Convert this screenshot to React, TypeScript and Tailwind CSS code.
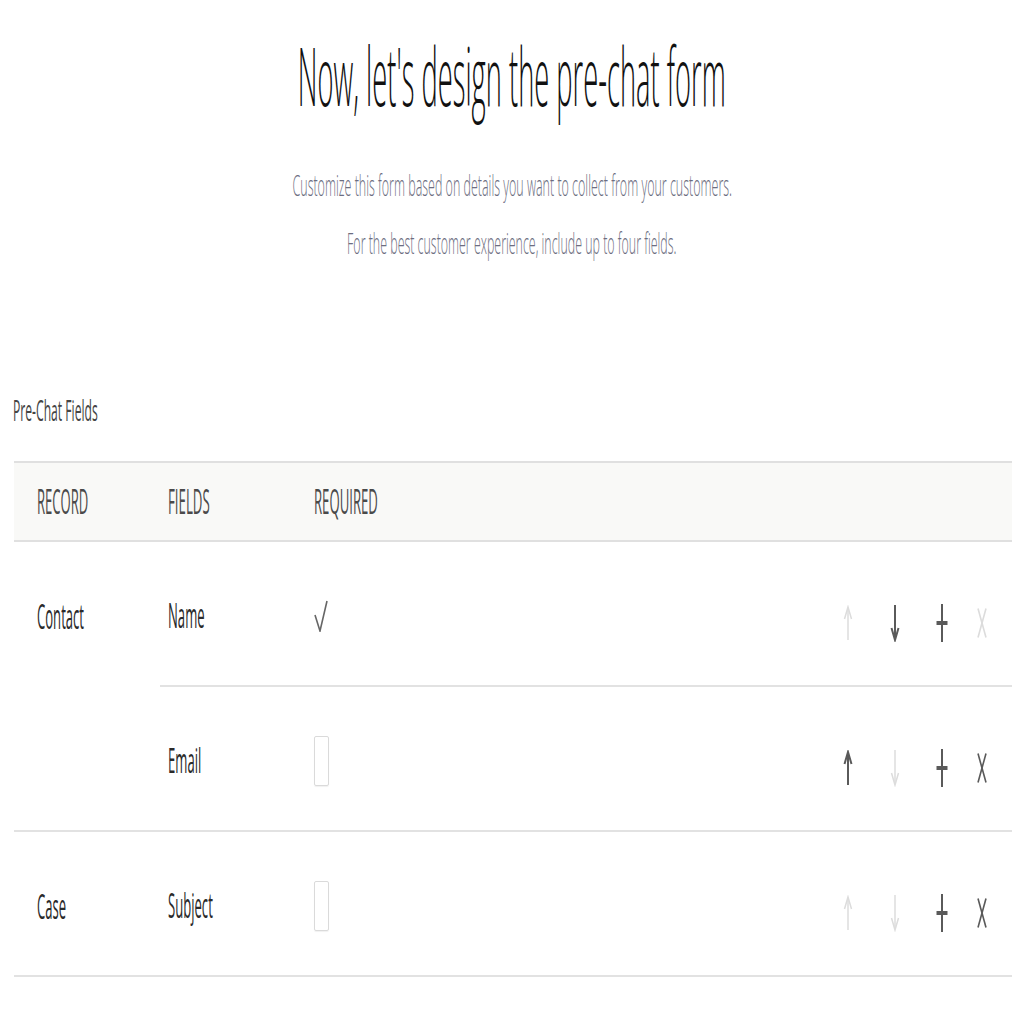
import React from 'react';

type Field = { name: string; required: boolean; up: boolean; down: boolean; remove: boolean };
type Group = { record: string; fields: Field[] };

const GROUPS: Group[] = [
  {
    record: 'Contact',
    fields: [
      { name: 'Name', required: true, up: false, down: true, remove: false },
      { name: 'Email', required: false, up: true, down: false, remove: true },
    ],
  },
  {
    record: 'Case',
    fields: [{ name: 'Subject', required: false, up: false, down: false, remove: true }],
  },
];

const ON = '#5a5a5a';
const OFF = '#dcdcdc';

// text in this design is drawn tall and narrow, so every label is squeezed horizontally
function T({ children, className }: { children: React.ReactNode; className: string }) {
  return <span className={`inline-block whitespace-nowrap leading-none ${className}`}>{children}</span>;
}

function ArrowUp({ on }: { on: boolean }) {
  const c = on ? ON : OFF;
  return (
    <svg width="10" height="36" viewBox="0 0 10 36" fill="none" stroke={c} strokeWidth={on ? 2 : 1.5}>
      <path d="M5 3V35" />
      <path d="M1.5 14L5 2L8.5 14" strokeLinejoin="miter" />
    </svg>
  );
}

function ArrowDown({ on }: { on: boolean }) {
  const c = on ? ON : OFF;
  return (
    <svg width="10" height="38" viewBox="0 0 10 38" fill="none" stroke={c} strokeWidth={on ? 2 : 1.5}>
      <path d="M5 1V35" />
      <path d="M1.5 24L5 36L8.5 24" strokeLinejoin="miter" />
    </svg>
  );
}

function Plus() {
  return (
    <svg width="12" height="38" viewBox="0 0 12 38" fill="none" stroke={ON}>
      <path d="M6 0V38" strokeWidth="2" />
      <path d="M0.5 19H11.5" strokeWidth="4" />
    </svg>
  );
}

function Cross({ on }: { on: boolean }) {
  return (
    <svg width="10" height="30" viewBox="0 0 10 30" fill="none" stroke={on ? ON : OFF} strokeWidth="1.6">
      <path d="M1 0.5C3 8 7 22 9 29.5" />
      <path d="M9 0.5C7 8 3 22 1 29.5" />
    </svg>
  );
}

function Check() {
  return (
    <svg width="14" height="32" viewBox="0 0 14 32" fill="none" stroke="#666" strokeWidth="1.6">
      <path d="M1 15L6 31L13 1" />
    </svg>
  );
}

function FieldRow({ field, last }: { field: Field; last: boolean }) {
  return (
    <div
      className={
        last
          ? 'flex h-[143px] items-center pl-[8px] pt-[5px]'
          : 'flex h-[145px] items-center border-b-2 border-[#e2e2e2] pl-[8px] pt-[5px]'
      }
    >
      <div className="w-[146px] shrink-0">
        <T className="origin-left scale-x-[0.385] text-[34px] text-[#2a2a2a]">{field.name}</T>
      </div>
      <div className="flex w-[40px] items-center">
        {field.required ? (
          <Check />
        ) : (
          <div className="h-[50px] w-[15px] rounded-[2px] border border-[#dadada] shadow-[0_1px_1px_rgba(0,0,0,0.06)]" />
        )}
      </div>
      <div className="ml-auto mr-[25px] mt-[14px] flex items-center">
        <ArrowUp on={field.up} />
        <div className="ml-[37px] flex">
          <ArrowDown on={field.down} />
        </div>
        <div className="ml-[36px] flex">
          <Plus />
        </div>
        <div className="ml-[29px] flex">
          <Cross on={field.remove} />
        </div>
      </div>
    </div>
  );
}

export default function App() {
  return (
    <div className="min-h-screen w-full overflow-hidden bg-white font-['Open_Sans',sans-serif]">
      <div className="flex justify-center pt-[33px]">
        <T className="origin-center scale-x-[0.333] text-[82px] font-light text-[#111111]">
          Now, let's design the pre-chat form
        </T>
      </div>

      <div className="mt-[41px]">
        <div className="flex h-[58px] items-center justify-center">
          <T className="origin-center scale-x-[0.416] text-[30px] font-light text-[#6c6d80]">
            Customize this form based on details you want to collect from your customers.
          </T>
        </div>
        <div className="flex h-[58px] items-center justify-center">
          <T className="origin-center scale-x-[0.414] text-[30px] font-light text-[#6c6d80]">
            For the best customer experience, include up to four fields.
          </T>
        </div>
      </div>

      <div className="mt-[123px] pl-[13px]">
        <T className="origin-left scale-x-[0.405] text-[30px] text-[#454545]">Pre-Chat Fields</T>
      </div>

      <div className="ml-[14px] mr-[12px] mt-[34px]">
        <div className="flex h-[81px] items-center border-y-2 border-[#e0e0e0] bg-[#f9f9f7]">
          <div className="w-[146px] shrink-0 pl-[23px]">
            <T className="origin-left scale-x-[0.385] text-[34px] text-[#4a4a4a]">RECORD</T>
          </div>
          <div className="w-[154px] shrink-0 pl-[8px]">
            <T className="origin-left scale-x-[0.39] text-[34px] text-[#4a4a4a]">FIELDS</T>
          </div>
          <div>
            <T className="origin-left scale-x-[0.387] text-[34px] text-[#4a4a4a]">REQUIRED</T>
          </div>
        </div>

        {GROUPS.map((g) => (
          <div key={g.record} className="flex border-b-2 border-[#e2e2e2]">
            <div className="w-[146px] shrink-0 pl-[23px]">
              <div className="flex h-[143px] items-center pt-[5px]">
                <T className="origin-left scale-x-[0.385] text-[34px] text-[#2a2a2a]">{g.record}</T>
              </div>
            </div>
            <div className="flex-1">
              {g.fields.map((f, i) => (
                <FieldRow key={f.name} field={f} last={i === g.fields.length - 1} />
              ))}
            </div>
          </div>
        ))}
      </div>
    </div>
  );
}
